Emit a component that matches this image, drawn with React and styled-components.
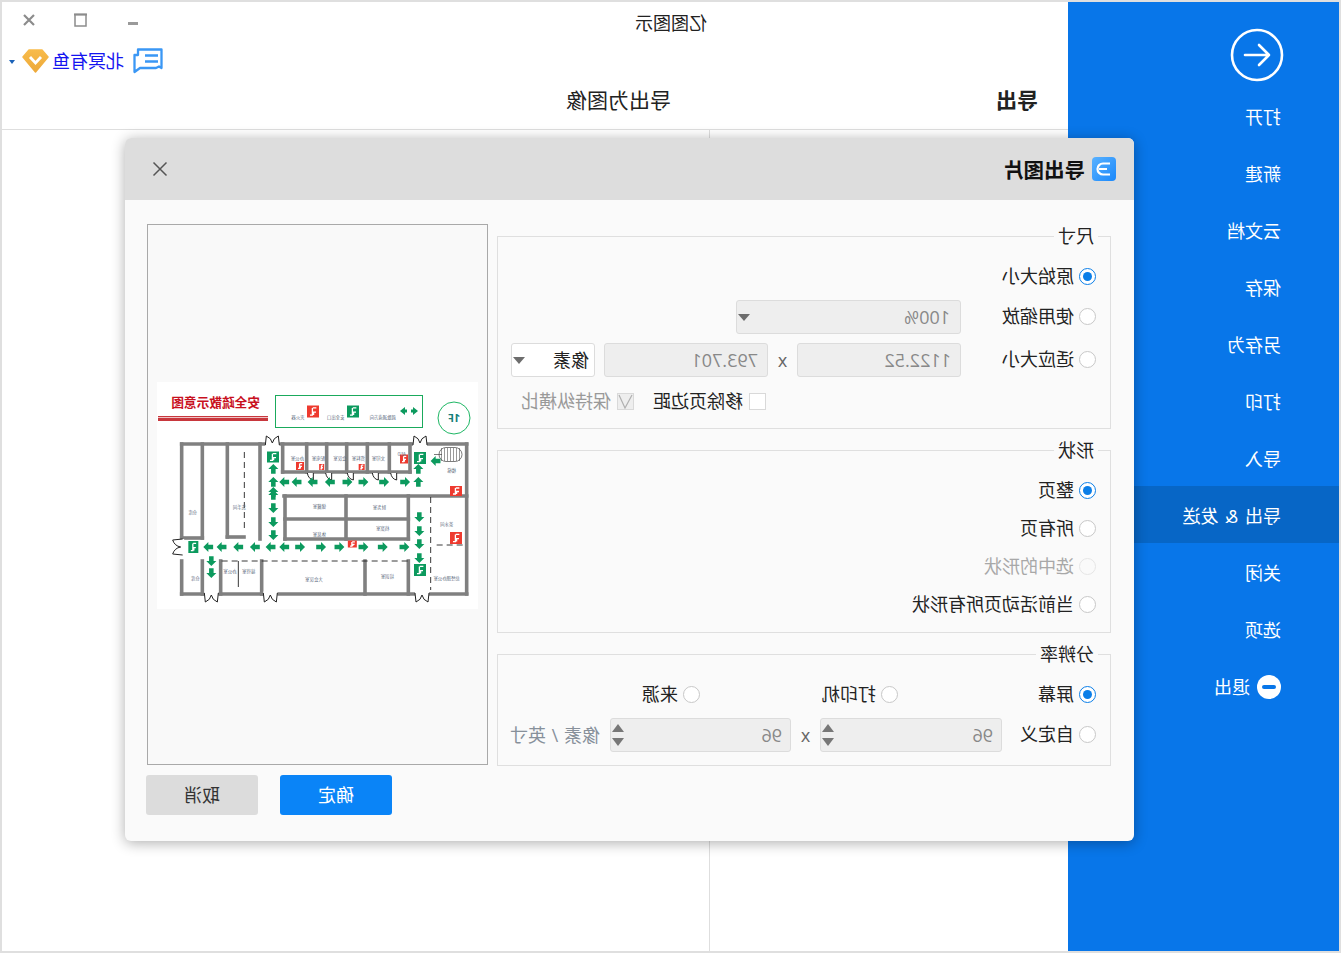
import React from 'react'
import styled, { createGlobalStyle, css } from 'styled-components'

const GlobalStyle = createGlobalStyle`
  html, body { margin: 0; padding: 0; background: #fff; }
  body { width: 1341px; height: 953px; overflow: hidden; font-family: "Open Sans", "Noto Sans CJK SC", sans-serif; }
  * { box-sizing: border-box; }
`

// the whole window is shown mirrored in the reference
const Mirror = styled.div`
  position: relative;
  width: 1341px;
  height: 953px;
  display: flex;
  border: 2px solid #dfdfdf;
  background: #fff;
  color: #222;
  font-size: 18px;
  line-height: 24px;
  transform: scaleX(-1);
`

const Sidebar = styled.nav`
  width: 271px;
  flex: none;
  background: #0876e9;
  color: #fff;
`
const BackButton = styled.div`
  height: 85px;
  padding: 26px 0 0 55px;
  svg { display: block; }
`
const MenuItem = styled.div`
  height: 57px;
  padding: 2px 0 0 58px;
  display: flex;
  align-items: center;
  gap: 7px;
  word-spacing: 2px;
  background: ${p => (p.$active ? '#0766c6' : 'transparent')};
`
const Main = styled.main`
  flex: 1;
  min-width: 0;
  display: flex;
  flex-direction: column;
`
const TitleBar = styled.div`
  height: 40px;
  display: flex;
  align-items: center;
  padding-top: 2px;
`
const AppTitle = styled.div`
  margin-left: 361px;
`
const WinControls = styled.div`
  margin-left: auto;
  align-self: flex-start;
  display: flex;
  margin-top: 6px;
  padding-right: 1px;
`
const WinButton = styled.div`
  width: 52px;
  height: 20px;
  display: flex;
  align-items: center;
  justify-content: center;
`
const UserRow = styled.div`
  height: 38px;
  display: flex;
  align-items: center;
  justify-content: flex-end;
  padding-right: 7px;
  svg { display: block; }
`
const UserName = styled.span`
  color: #1414f0;
  margin: 0 3px 0 9px;
`
const UserCaret = styled.span`
  margin-left: 7px;
  margin-top: 2px;
  border-left: 3.5px solid transparent;
  border-right: 3.5px solid transparent;
  border-top: 4px solid #1b62b8;
`
const TabHead = styled.div`
  height: 50px;
  display: grid;
  grid-template-columns: 359px 1fr;
  align-items: start;
  padding-top: 7px;
  border-bottom: 1px solid #dedede;
  font-size: 21px;
  line-height: 26px;
`
const TabTitle = styled.div`
  padding-left: ${p => p.$pad}px;
  font-weight: ${p => (p.$bold ? 700 : 400)};
`
const Panes = styled.div`
  flex: 1;
  display: flex;
`
const LeftPane = styled.div`
  width: 359px;
  border-right: 1px solid #dedede;
`

const Dialog = styled.section`
  position: absolute;
  left: 205px;
  top: 136px;
  width: 1009px;
  height: 703px;
  background: #fafafa;
  border-radius: 6px;
  box-shadow: 0 2px 14px rgba(0, 0, 0, 0.32);
  overflow: hidden;
  display: flex;
  flex-direction: column;
`
const DialogHead = styled.header`
  height: 62px;
  flex: none;
  background: #dddddd;
  display: flex;
  align-items: center;
  gap: 7px;
  padding: 0 27px 0 18px;
  svg { display: block; }
`
const DialogTitle = styled.div`
  font-size: 20.5px;
  font-weight: 700;
  color: #111;
  padding-top: 2px;
`
const CloseBtn = styled.div`
  margin-left: auto;
  line-height: 0;
`
const DialogBody = styled.div`
  flex: 1;
  display: flex;
  gap: 9px;
  padding: 24px 22px 0 23px;
`
const OptionsCol = styled.div`
  width: 614px;
  display: flex;
  flex-direction: column;
  gap: 9px;
`
const Group = styled.fieldset`
  margin: 0;
  padding: 0 0 0 14px;
  min-width: 0;
  height: ${p => p.$h}px;
  border: 1px solid #dfdfdf;
`
const Legend = styled.legend`
  margin-left: -2px;
  padding: 0 4px;
  font-size: 18px;
  line-height: 24px;
`
const Row = styled.div`
  display: flex;
  align-items: center;
  height: ${p => p.$h || 34}px;
  margin-top: ${p => p.$mt || 0}px;
`
const RadioLabel = styled.label`
  display: flex;
  align-items: center;
  gap: 5px;
  width: ${p => (p.$w ? `${p.$w}px` : 'auto')};
  flex: none;
  margin-top: ${p => (p.$up ? -2 : 0)}px;
  color: ${p => (p.$off ? '#a8a8a8' : '#222')};
`
const Radio = styled.span`
  position: relative;
  width: 17px;
  height: 17px;
  flex: none;
  border-radius: 50%;
  background: ${p => (p.$off ? '#fafafa' : '#fff')};
  border: 1px solid ${p => (p.$on ? '#0a7ee8' : p.$off ? '#e6e6e6' : '#c8c8c8')};
  ${p => p.$on && css`
    &::after {
      content: '';
      position: absolute;
      left: 3px;
      top: 3px;
      width: 9px;
      height: 9px;
      border-radius: 50%;
      background: #0a7ee8;
    }
  `}
`
const fieldBox = css`
  height: 34px;
  background: #eeeeee;
  border: 1px solid #dcdcdc;
  border-radius: 3px;
  color: #888;
  font: inherit;
`
const Field = styled.input`
  ${fieldBox}
  width: ${p => p.$w}px;
  flex: none;
  padding: 0 0 0 9px;
  outline: none;
`
const Caret = styled.span`
  border-left: 6px solid transparent;
  border-right: 6px solid transparent;
  border-top: 7px solid #6d6d6d;
`
const SelectBox = styled.div`
  ${fieldBox}
  width: ${p => p.$w}px;
  flex: none;
  display: flex;
  align-items: center;
  justify-content: space-between;
  padding: 0 1px 0 ${p => p.$pad || 10}px;
  ${p => p.$white && css`
    background: #fff;
    color: #222;
    margin-left: 9px;
  `}
`
const Times = styled.span`
  width: ${p => p.$w || 29}px;
  flex: none;
  text-align: center;
  color: #666;
`
const CheckGroup = styled.div`
  display: flex;
  align-items: center;
  margin-left: ${p => p.$ml}px;
`
const CheckItem = styled.label`
  display: flex;
  align-items: center;
  gap: 6px;
  margin-right: 19px;
  color: ${p => (p.$off ? '#999' : '#222')};
`
const CheckBox = styled.span`
  width: 17px;
  height: 17px;
  flex: none;
  background: ${p => (p.$off ? '#eeeeee' : '#fff')};
  border: 1px solid #d9d9d9;
  display: flex;
  align-items: center;
  justify-content: center;
`
const SpinWrap = styled.div`
  ${fieldBox}
  width: ${p => p.$w}px;
  flex: none;
  display: flex;
  align-items: center;
  justify-content: space-between;
  padding: 0 1px 0 8px;
`
const SpinArrows = styled.span`
  display: flex;
  flex-direction: column;
  gap: 6px;
`
const SpinUp = styled.span`
  border-left: 6px solid transparent;
  border-right: 6px solid transparent;
  border-bottom: 8px solid #777;
`
const SpinDown = styled(SpinUp)`
  border-bottom: 0;
  border-top: 8px solid #777;
`
const UnitText = styled.span`
  margin-left: 10px;
  color: #87909a;
  word-spacing: 1px;
`
const PreviewCol = styled.div`
  width: 341px;
  flex: none;
`
const PreviewBox = styled.div`
  height: 541px;
  padding-top: 2px;
  background: #f9f9f9;
  border: 1px solid #a9a9a9;
  display: flex;
  align-items: center;
  justify-content: center;
  svg { display: block; background: #fff; }
`
const ButtonRow = styled.div`
  display: flex;
  justify-content: flex-end;
  gap: 22px;
  margin: 10px -1px 0 0;
`
const Btn = styled.button`
  width: 112px;
  height: 40px;
  border: 0;
  border-radius: 3px;
  font: inherit;
  background: ${p => (p.$primary ? '#0a84f7' : '#dcdcdc')};
  color: ${p => (p.$primary ? '#fff' : '#333')};
`

// ---- floor plan, coordinates read from the reference ----
const X = z => 328 - z / 3
const GREEN = '#0c9a5e'
const RED = '#ee3a2f'

const walls = [
  [95, 62, 950, 62], [950, 62, 950, 212], [95, 212, 950, 212],
  [95, 62, 95, 156], [157, 62, 157, 156], [95, 156, 157, 156],
  [232, 62, 232, 155], [232, 155, 282, 155], [330, 62, 330, 157],
  [398, 62, 398, 90], [470, 62, 470, 90], [530, 62, 530, 90], [590, 62, 590, 90],
  [652, 62, 652, 90], [718, 62, 718, 90], [780, 62, 780, 90], [398, 90, 780, 90],
  [402, 114, 950, 114], [405, 114, 405, 157], [588, 114, 588, 157], [775, 114, 775, 157],
  [405, 137, 775, 137], [405, 157, 775, 157],
  [95, 179, 95, 212], [157, 179, 157, 212], [212, 179, 212, 212],
  [335, 179, 335, 212], [645, 179, 645, 212], [775, 179, 775, 212],
]
const dashes = [
  [215, 179, 780, 179], [842, 115, 842, 208], [860, 163, 940, 163], [283, 70, 283, 150],
]
const arrows = [
  [370, 87, 'u'], [370, 100, 'u'], [370, 110, 'u'], [805, 87, 'u'], [805, 100, 'u'],
  [403, 100, 'l'], [440, 100, 'l'], [488, 100, 'l'], [540, 100, 'l'],
  [592, 100, 'r'], [640, 100, 'r'], [702, 100, 'r'], [765, 100, 'r'], [857, 79, 'l'],
  [370, 113, 'u'], [370, 126, 'd'], [370, 140, 'd'], [370, 153, 'd'],
  [808, 135, 'd'], [808, 149, 'd'], [808, 162, 'd'], [808, 176, 'd'],
  [184, 179, 'd'], [184, 191, 'd'],
  [175, 165, 'l'], [215, 165, 'l'], [265, 165, 'l'], [315, 165, 'l'], [362, 165, 'l'], [403, 165, 'l'],
  [450, 165, 'r'], [513, 165, 'r'], [568, 165, 'r'], [640, 165, 'r'], [698, 165, 'r'], [763, 165, 'r'],
]
const rotation = { l: 0, r: 180, u: -90, d: 90 }
const labels = [
  ['灭火器', 444, 37], ['安全出口', 557, 37], ['疏散通道方向', 698, 37],
  ['办公室', 442, 78], ['配电室', 505, 78], ['会议室', 570, 78], ['资料室', 625, 78],
  ['文印室', 685, 78], ['AED', 755, 74], ['楼梯', 905, 90],
  ['仓库', 128, 132], ['洗手间', 268, 127], ['储藏室', 508, 126], ['财务室', 688, 127],
  ['档案室', 698, 148], ['休息室', 508, 154], ['茶水间', 890, 144],
  ['办公室', 240, 191], ['接待室', 296, 191], ['大会议室', 492, 199], ['培训室', 712, 196], ['总经理办公室', 890, 198], ['仓库', 136, 198],
]

const Sign = ({ zx, y, w, h, fill }) => (
  <g transform={`translate(${X(zx)} ${y})`}>
    <rect x={-w / 2} y={-h / 2} width={w} height={h} fill={fill} />
    <path
      d={`M${-w * 0.28} ${-h * 0.3} h${w * 0.3} M${w * 0.05} ${-h * 0.3} v${h * 0.6} h${w * 0.2} M${-w * 0.25} ${h * 0.05} h${w * 0.2} v${h * 0.25}`}
      stroke="#fff"
      strokeWidth="1.3"
      fill="none"
    />
  </g>
)

const Door = ({ zx, y, flip }) => (
  <g transform={`translate(${X(zx)} ${y}) scale(1 ${flip ? -1 : 1})`}>
    <rect x="-7" y="-2.5" width="14" height="5" fill="#fff" />
    <path d="M-7 1 L-6 -8 Q-1 -6 0 -1 Q1 -6 6 -8 L7 1" stroke="#222" fill="none" strokeWidth="1" />
  </g>
)

const FloorPlan = () => (
  <svg width="321" height="227" viewBox="0 0 321 227">
    <text x="218" y="25" fontSize="12.7" fontWeight="700" fill="#c8101e" fontFamily="Noto Sans CJK SC, sans-serif">安全疏散示意图</text>
    <rect x="210" y="34" width="110" height="1.3" fill="#c8373d" />
    <rect x="210" y="36" width="110" height="3" fill="#c8373d" />
    <rect x="55.5" y="13.5" width="147" height="32" fill="none" stroke="#1aaa5c" strokeWidth="1" />
    <Sign zx={489} y={29.5} w={12} h={12} fill={RED} />
    <Sign zx={609} y={29.5} w={12} h={12} fill={GREEN} />
    <g fill={GREEN}>
      <path d="M60 29 l5 -4 v2.5 h2 v3 h-2 v2.5 Z" />
      <path d="M78 29 l-5 -4 v2.5 h-2 v3 h2 v2.5 Z" />
    </g>
    <circle cx="24" cy="36" r="16" fill="#fff" stroke="#1fb765" strokeWidth="1" />
    <text x="24" y="40" fontSize="11" fontWeight="700" textAnchor="middle" fill="#17807a" fontFamily="Open Sans, sans-serif">1F</text>

    <g stroke="#808080" strokeWidth="3.6" strokeLinecap="square">
      {walls.map(([a, b, c, d], i) => (
        <line key={i} x1={X(a)} y1={b} x2={X(c)} y2={d} />
      ))}
    </g>
    <g stroke="#222" strokeWidth="0.9" strokeDasharray="6 4">
      {dashes.map(([a, b, c, d], i) => (
        <line key={i} x1={X(a)} y1={b} x2={X(c)} y2={d} />
      ))}
    </g>
    <line x1={X(265)} y1="179" x2={X(265)} y2="205" stroke="#222" strokeWidth="0.9" />

    <Door zx={367} y={62} />
    <Door zx={810} y={62} />
    <Door zx={184} y={212} flip />
    <Door zx={361} y={212} flip />
    <Door zx={816} y={212} flip />
    <g transform={`translate(${X(95)} 165) rotate(90)`}>
      <rect x="-8" y="-2.5" width="16" height="5" fill="#fff" />
      <path d="M-8 1 L-7 -9 Q-1 -7 0 -1 Q1 -7 7 -9 L8 1" stroke="#222" fill="none" strokeWidth="1" />
    </g>
    {[490, 545, 610, 685, 740].map(z => (
      <path key={z} d={`M${X(z)} 91 v7 q5 -1 6 -7`} stroke="#222" fill="#fff" strokeWidth="1" />
    ))}

    <g>
      <rect x="16" y="65.5" width="23" height="14" rx="7" fill="#fff" stroke="#444" strokeWidth="0.7" />
      {[...Array(7)].map((_, i) => (
        <line key={i} x1={18.5 + i * 3} y1="66" x2={18.5 + i * 3} y2="79" stroke="#555" strokeWidth="0.6" />
      ))}
      <line x1="36" y1="72.5" x2="44" y2="72.5" stroke="#444" strokeWidth="0.7" />
    </g>

    <g fill={GREEN}>
      {arrows.map(([z, y, dir], i) => (
        <path key={i} transform={`translate(${X(z)} ${y}) rotate(${rotation[dir]}) scale(1.2)`} d="M4.2 0 L0 -4.2 V-1.9 H-4 V1.9 H0 V4.2 Z" />
      ))}
    </g>

    <Sign zx={369} y={75} w={12} h={11} fill={GREEN} />
    <Sign zx={810} y={76} w={12} h={12} fill={GREEN} />
    <Sign zx={130} y={165} w={10} h={12} fill={GREEN} />
    <Sign zx={810} y={188} w={12} h={12} fill={GREEN} />
    <Sign zx={450} y={84} w={8} h={8} fill={RED} />
    <Sign zx={515} y={85} w={5} h={6} fill={RED} />
    <Sign zx={635} y={85} w={6} h={6} fill={RED} />
    <Sign zx={762} y={77} w={8} h={9} fill={RED} />
    <Sign zx={918} y={109} w={12} h={10} fill={RED} />
    <Sign zx={607} y={162} w={9} h={7} fill={RED} />
    <Sign zx={918} y={156} w={12} h={12} fill={RED} />

    <g fontSize="4.4" fill="#5e6c80" textAnchor="middle" fontFamily="Noto Sans CJK SC, sans-serif">
      {labels.map(([t, z, y], i) => (
        <text key={i} x={X(z)} y={y}>{t}</text>
      ))}
    </g>
  </svg>
)

const BackIcon = () => (
  <svg width="54" height="54" viewBox="0 0 54 54" fill="none" stroke="#fff" strokeWidth="2.6" strokeLinecap="round" strokeLinejoin="round">
    <circle cx="27" cy="27" r="25" />
    <path d="M15 27 H39 M25 17 L15 27 L25 37" />
  </svg>
)
const ExitIcon = () => (
  <svg width="24" height="24" viewBox="0 0 24 24">
    <circle cx="12" cy="12" r="12" fill="#fff" />
    <rect x="5" y="10" width="14" height="4" rx="2" fill="#0876e9" />
  </svg>
)
const ChatIcon = () => (
  <svg width="30" height="26" viewBox="0 0 30 26" fill="none" stroke="#3a97f5" strokeWidth="2.3" strokeLinejoin="round">
    <path d="M1.5 1.5 H25 V7 H28.5 V24 L23 20 H7 L4 18.5 L1.5 20 Z" />
    <path d="M5 7.5 H18 M5 13.5 H18" />
  </svg>
)
const GemIcon = () => (
  <svg width="27" height="24" viewBox="0 0 27 24">
    <defs>
      <linearGradient id="gem" x1="0" y1="0" x2="0" y2="1">
        <stop offset="0" stopColor="#f8bb4a" />
        <stop offset="1" stopColor="#eda93a" />
      </linearGradient>
    </defs>
    <path d="M7 1 H20 L26 8 L13.5 23 L1 8 Z" fill="url(#gem)" stroke="url(#gem)" strokeWidth="1.5" strokeLinejoin="round" />
    <path d="M8 8 L13.5 14 L19 8" fill="none" stroke="#fff" strokeWidth="2.8" />
  </svg>
)
const LogoIcon = () => (
  <svg width="24" height="24" viewBox="0 0 24 24">
    <defs>
      <linearGradient id="logo" x1="0" y1="1" x2="1" y2="0">
        <stop offset="0" stopColor="#1a88fb" />
        <stop offset="1" stopColor="#5ab2ff" />
      </linearGradient>
    </defs>
    <rect width="24" height="24" rx="4" fill="url(#logo)" />
    <path d="M6 6.5 H13 a5.5 5.5 0 0 1 0 11 H6 M9 12 H17" fill="none" stroke="#fff" strokeWidth="2.2" />
  </svg>
)
const CloseX = () => (
  <svg width="16" height="16" viewBox="0 0 16 16" stroke="#555" strokeWidth="1.5">
    <path d="M1.5 1.5 L14.5 14.5 M14.5 1.5 L1.5 14.5" />
  </svg>
)

const menu = ['打开', '新建', '云文档', '保存', '另存为', '打印', '导入', '导出 & 发送', '关闭', '选项']

export default function App() {
  return (
    <>
      <GlobalStyle />
      <Mirror>
        <Sidebar>
          <BackButton><BackIcon /></BackButton>
          {menu.map(m => (
            <MenuItem key={m} $active={m === '导出 & 发送'}>{m}</MenuItem>
          ))}
          <MenuItem><ExitIcon />退出</MenuItem>
        </Sidebar>

        <Main>
          <TitleBar>
            <AppTitle>亿图图示</AppTitle>
            <WinControls>
              <WinButton>
                <svg width="10" height="3" style={{ marginTop: 6 }}><rect width="10" height="3" fill="#9a9a9a" /></svg>
              </WinButton>
              <WinButton>
                <svg width="13" height="14" fill="none" stroke="#8c8c8c"><rect x="1" y="1.5" width="11" height="11.5" strokeWidth="1.5" /><path d="M0 1.5 H13" strokeWidth="2" /></svg>
              </WinButton>
              <WinButton>
                <svg width="12" height="12" stroke="#8c8c8c" strokeWidth="2.2"><path d="M1 1 L11 11 M11 1 L1 11" /></svg>
              </WinButton>
            </WinControls>
          </TitleBar>
          <UserRow>
            <ChatIcon />
            <UserName>北冥有鱼</UserName>
            <GemIcon />
            <UserCaret />
          </UserRow>
          <TabHead>
            <TabTitle $pad={30} $bold>导出</TabTitle>
            <TabTitle $pad={38}>导出为图像</TabTitle>
          </TabHead>
          <Panes><LeftPane /></Panes>
        </Main>

        <Dialog>
          <DialogHead>
            <LogoIcon />
            <DialogTitle>导出图片</DialogTitle>
            <CloseBtn><CloseX /></CloseBtn>
          </DialogHead>
          <DialogBody>
            <OptionsCol>
              <Group $h={205}>
                <Legend>尺寸</Legend>
                <Row $mt={11}>
                  <RadioLabel><Radio $on />原始大小</RadioLabel>
                </Row>
                <Row $mt={7}>
                  <RadioLabel $w={135} $up><Radio />使用缩放</RadioLabel>
                  <SelectBox $w={225}>100%<Caret /></SelectBox>
                </Row>
                <Row $mt={9}>
                  <RadioLabel $w={135} $up><Radio />适应大小</RadioLabel>
                  <Field $w={164} readOnly value="1122.52" />
                  <Times>x</Times>
                  <Field $w={164} readOnly value="793.701" />
                  <SelectBox $w={84} $white $pad={5}>像素<Caret /></SelectBox>
                </Row>
                <Row $mt={7}>
                  <CheckGroup $ml={330}>
                    <CheckItem><CheckBox />移除页边距</CheckItem>
                    <CheckItem $off>
                      <CheckBox $off>
                        <svg width="15" height="15" fill="none" stroke="#b0b0b0" strokeWidth="1.2"><path d="M1 1 L8 14 L14 1" /></svg>
                      </CheckBox>
                      保持纵横比
                    </CheckItem>
                  </CheckGroup>
                </Row>
              </Group>

              <Group $h={195}>
                <Legend>形状</Legend>
                <Row $h={38} $mt={9}><RadioLabel><Radio $on />整页</RadioLabel></Row>
                <Row $h={38}><RadioLabel><Radio />所有页</RadioLabel></Row>
                <Row $h={38}><RadioLabel $off><Radio $off />选中的形状</RadioLabel></Row>
                <Row $h={38}><RadioLabel><Radio />当前活动页所有形状</RadioLabel></Row>
              </Group>

              <Group $h={124}>
                <Legend>分辨率</Legend>
                <Row $mt={11}>
                  <RadioLabel $w={198}><Radio $on />屏幕</RadioLabel>
                  <RadioLabel $w={198}><Radio />打印机</RadioLabel>
                  <RadioLabel><Radio />来源</RadioLabel>
                </Row>
                <Row $mt={7}>
                  <RadioLabel $w={94} $up><Radio />自定义</RadioLabel>
                  <SpinWrap $w={182}>96<SpinArrows><SpinUp /><SpinDown /></SpinArrows></SpinWrap>
                  <Times>x</Times>
                  <SpinWrap $w={181}>96<SpinArrows><SpinUp /><SpinDown /></SpinArrows></SpinWrap>
                  <UnitText>像素 / 英寸</UnitText>
                </Row>
              </Group>
            </OptionsCol>

            <PreviewCol>
              <PreviewBox><FloorPlan /></PreviewBox>
              <ButtonRow>
                <Btn $primary>确定</Btn>
                <Btn>取消</Btn>
              </ButtonRow>
            </PreviewCol>
          </DialogBody>
        </Dialog>
      </Mirror>
    </>
  )
}
